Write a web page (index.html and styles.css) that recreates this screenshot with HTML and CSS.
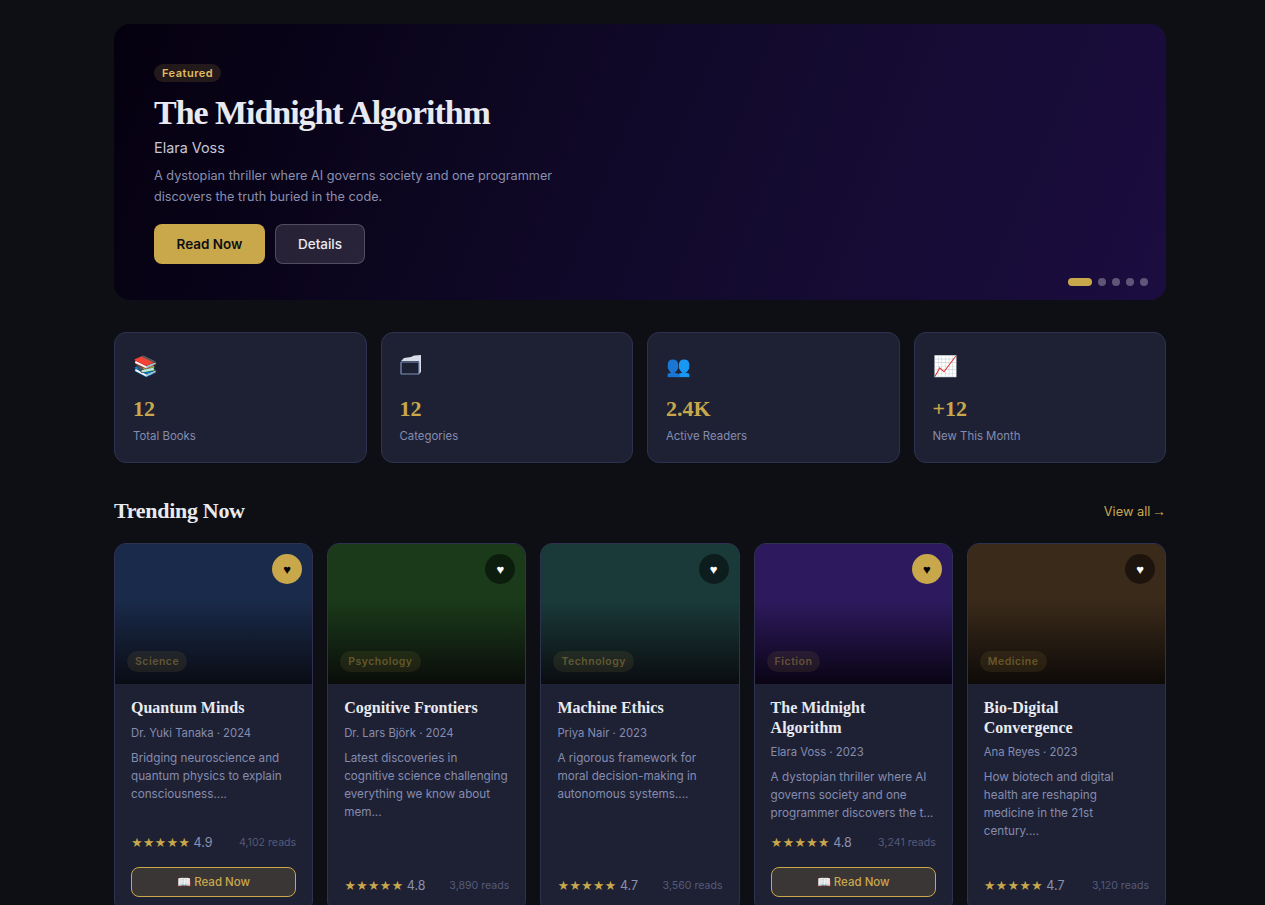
FILE: index.html
```html
<!DOCTYPE html>
<html lang="en">
<head>
    <meta charset="UTF-8">
    <meta name="viewport" content="width=device-width, initial-scale=1.0">
    <title>Library</title>
    <link rel="stylesheet" href="styles.css">
</head>
<body>
    <div class="container">
        <section class="hero">
            <span class="hero-badge">Featured</span>
            <h1 class="hero-title">The Midnight Algorithm</h1>
            <p class="hero-author">Elara Voss</p>
            <p class="hero-desc">A dystopian thriller where AI governs society and one programmer discovers the truth buried in the code.</p>
            <div class="hero-actions">
                <button class="btn btn-primary" type="button">Read Now</button>
                <button class="btn btn-ghost" type="button">Details</button>
            </div>
            <div class="hero-dots">
                <span class="dot active"></span>
                <span class="dot"></span>
                <span class="dot"></span>
                <span class="dot"></span>
                <span class="dot"></span>
            </div>
        </section>

        <section class="stats">
            <div class="stat-card">
                <div class="stat-icon">📚</div>
                <div class="stat-value">12</div>
                <div class="stat-label">Total Books</div>
            </div>
            <div class="stat-card">
                <div class="stat-icon">
                    <svg class="folder-icon" viewBox="0 0 22 22" width="22" height="22">
                        <path d="M1 7 L4 4 L11 3 L14 1.5 L21 1 V18 L19 20 V7 Z" fill="#d8dce8"/>
                        <rect x="1" y="8" width="18" height="12" rx="0.5" fill="#1b2033" stroke="#7f93b8" stroke-width="1.2"/>
                    </svg>
                </div>
                <div class="stat-value">12</div>
                <div class="stat-label">Categories</div>
            </div>
            <div class="stat-card">
                <div class="stat-icon">👥</div>
                <div class="stat-value">2.4K</div>
                <div class="stat-label">Active Readers</div>
            </div>
            <div class="stat-card">
                <div class="stat-icon">📈</div>
                <div class="stat-value">+12</div>
                <div class="stat-label">New This Month</div>
            </div>
        </section>

        <div class="section-header">
            <h2 class="section-title">Trending Now</h2>
            <a class="view-all" href="#">View all <span class="arrow">→</span></a>
        </div>

        <section class="book-grid">
            <article class="book-card">
                <div class="book-cover cover-science">
                    <button class="fav-btn active" type="button">♥</button>
                    <span class="book-tag">Science</span>
                </div>
                <div class="book-body">
                    <h3 class="book-title">Quantum Minds</h3>
                    <p class="book-meta">Dr. Yuki Tanaka · 2024</p>
                    <p class="book-desc">Bridging neuroscience and quantum physics to explain consciousness....</p>
                    <div class="book-footer">
                        <div class="book-stats">
                            <span class="rating"><span class="stars">★★★★★</span> 4.9</span>
                            <span class="reads">4,102 reads</span>
                        </div>
                        <button class="read-btn" type="button">📖 Read Now</button>
                    </div>
                </div>
            </article>

            <article class="book-card">
                <div class="book-cover cover-psychology">
                    <button class="fav-btn" type="button">♥</button>
                    <span class="book-tag">Psychology</span>
                </div>
                <div class="book-body">
                    <h3 class="book-title">Cognitive Frontiers</h3>
                    <p class="book-meta">Dr. Lars Björk · 2024</p>
                    <p class="book-desc">Latest discoveries in cognitive science challenging everything we know about mem...</p>
                    <div class="book-footer">
                        <div class="book-stats">
                            <span class="rating"><span class="stars">★★★★★</span> 4.8</span>
                            <span class="reads">3,890 reads</span>
                        </div>
                    </div>
                </div>
            </article>

            <article class="book-card">
                <div class="book-cover cover-technology">
                    <button class="fav-btn" type="button">♥</button>
                    <span class="book-tag">Technology</span>
                </div>
                <div class="book-body">
                    <h3 class="book-title">Machine Ethics</h3>
                    <p class="book-meta">Priya Nair · 2023</p>
                    <p class="book-desc">A rigorous framework for moral decision-making in autonomous systems....</p>
                    <div class="book-footer">
                        <div class="book-stats">
                            <span class="rating"><span class="stars">★★★★★</span> 4.7</span>
                            <span class="reads">3,560 reads</span>
                        </div>
                    </div>
                </div>
            </article>

            <article class="book-card">
                <div class="book-cover cover-fiction">
                    <button class="fav-btn active" type="button">♥</button>
                    <span class="book-tag">Fiction</span>
                </div>
                <div class="book-body">
                    <h3 class="book-title">The Midnight Algorithm</h3>
                    <p class="book-meta">Elara Voss · 2023</p>
                    <p class="book-desc">A dystopian thriller where AI governs society and one programmer discovers the t...</p>
                    <div class="book-footer">
                        <div class="book-stats">
                            <span class="rating"><span class="stars">★★★★★</span> 4.8</span>
                            <span class="reads">3,241 reads</span>
                        </div>
                        <button class="read-btn" type="button">📖 Read Now</button>
                    </div>
                </div>
            </article>

            <article class="book-card">
                <div class="book-cover cover-medicine">
                    <button class="fav-btn" type="button">♥</button>
                    <span class="book-tag">Medicine</span>
                </div>
                <div class="book-body">
                    <h3 class="book-title">Bio-Digital Convergence</h3>
                    <p class="book-meta">Ana Reyes · 2023</p>
                    <p class="book-desc">How biotech and digital health are reshaping medicine in the 21st century....</p>
                    <div class="book-footer">
                        <div class="book-stats">
                            <span class="rating"><span class="stars">★★★★★</span> 4.7</span>
                            <span class="reads">3,120 reads</span>
                        </div>
                    </div>
                </div>
            </article>
        </section>
    </div>
</body>
</html>
```
FILE: styles.css
```css
* {
    box-sizing: border-box;
}
html, body {
    height: 100%;
    overflow: hidden;
}
body {
    margin: 0;
    background-color: #0d0f14;
    color: #e8eaf0;
    font-family: 'Inter', 'Noto Sans', sans-serif;
}
.container {
    width: 1052px;
    margin-left: 114px;
    padding-top: 24px;
}
h1, h2, h3, p {
    margin: 0;
}

/* hero */
.hero {
    position: relative;
    height: 276px;
    padding: 40px;
    border-radius: 16px;
    background: linear-gradient(112deg, #05000f 0%, #120a2c 55%, #1b0d40 100%);
}
.hero-badge {
    display: block;
    width: fit-content;
    padding: 3px 8px;
    border-radius: 20px;
    background-color: rgba(201, 168, 76, 0.15);
    color: #e0bc62;
    font-size: 11px;
    font-weight: 600;
    line-height: 12px;
    letter-spacing: 0.5px;
}
.hero-title {
    margin-top: 9px;
    font-family: 'Liberation Serif', serif;
    font-size: 34px;
    font-weight: 700;
    line-height: 44px;
    letter-spacing: -1.05px;
    color: #e8eaf0;
}
.hero-author {
    margin-top: 2px;
    font-size: 14.4px;
    line-height: 22px;
    color: #c4c7d4;
}
.hero-desc {
    width: 420px;
    margin-top: 6px;
    font-size: 12.7px;
    line-height: 21px;
    color: #8b90ae;
}
.hero-actions {
    display: flex;
    gap: 10px;
    margin-top: 17px;
}
.btn {
    height: 40px;
    border-radius: 8px;
    font-family: inherit;
    font-size: 13.5px;
    font-weight: 500;
}
.btn-primary {
    width: 111px;
    border: none;
    background-color: #c9a84c;
    color: #0d0f14;
    font-weight: 600;
}
.btn-ghost {
    width: 90px;
    border: 1px solid rgba(255, 255, 255, 0.2);
    background-color: rgba(255, 255, 255, 0.12);
    color: #e8eaf0;
}
.hero-dots {
    position: absolute;
    right: 18px;
    bottom: 14px;
    display: flex;
    gap: 6px;
}
.dot {
    width: 8px;
    height: 8px;
    border-radius: 4px;
    background-color: rgba(255, 255, 255, 0.3);
}
.dot.active {
    width: 24px;
    background-color: #c9a84c;
}

/* stats */
.stats {
    display: grid;
    grid-template-columns: repeat(4, 1fr);
    gap: 14px;
    margin-top: 32px;
}
.stat-card {
    height: 131px;
    padding: 20px 18px;
    border: 1px solid #2e3250;
    border-radius: 12px;
    background-color: #1e2133;
}
.stat-icon {
    display: flow-root;
    height: 26px;
    font-size: 20px;
    line-height: 26px;
}
.folder-icon {
    display: block;
    margin-top: 1px;
}
.stat-value {
    margin-top: 15px;
    font-family: 'Liberation Serif', serif;
    font-size: 22px;
    font-weight: 700;
    line-height: 30px;
    color: #c9a84c;
}
.stat-label {
    margin-top: 4px;
    font-size: 11.4px;
    line-height: 16px;
    color: #858cb0;
}

/* trending */
.section-header {
    display: flex;
    justify-content: space-between;
    align-items: center;
    margin-top: 32px;
}
.section-title {
    font-family: 'Liberation Serif', serif;
    font-size: 22px;
    font-weight: 700;
    line-height: 32px;
    letter-spacing: -0.3px;
}
.view-all {
    color: #c9a84c;
    font-size: 12.8px;
    text-decoration: none;
}
.arrow {
    margin-left: -2px;
    font-family: 'Liberation Sans', sans-serif;
    font-size: 14px;
}
.book-grid {
    display: grid;
    grid-template-columns: repeat(5, 1fr);
    gap: 14px;
    margin-top: 16px;
}
.book-card {
    display: flex;
    flex-direction: column;
    height: 370px;
    border: 1px solid #2e3250;
    border-radius: 12px;
    background-color: #1e2133;
    overflow: hidden;
}
.book-cover {
    position: relative;
    flex: none;
    height: 140px;
}
.cover-science { background: linear-gradient(to top, #0a0c14 0%, #1a2a4a 60%); }
.cover-psychology { background: linear-gradient(to top, #0a0c0a 0%, #1a3a1a 60%); }
.cover-technology { background: linear-gradient(to top, #0a0c10 0%, #1a3a3a 60%); }
.cover-fiction { background: linear-gradient(to top, #0a0414 0%, #2d1a5e 60%); }
.cover-medicine { background: linear-gradient(to top, #0e0a08 0%, #3a2a1a 60%); }
.fav-btn {
    position: absolute;
    top: 10px;
    right: 10px;
    width: 30px;
    height: 30px;
    padding: 0;
    border: none;
    border-radius: 50%;
    background-color: rgba(0, 0, 0, 0.5);
    color: #ffffff;
    font-size: 13px;
}
.fav-btn.active {
    background-color: #c9a84c;
    color: #000000;
}
.book-tag {
    position: absolute;
    left: 12px;
    bottom: 12px;
    padding: 4px 8px;
    border-radius: 20px;
    background-color: rgba(201, 168, 76, 0.1);
    color: rgba(201, 168, 76, 0.4);
    font-size: 10.5px;
    font-weight: 600;
    line-height: 13px;
    letter-spacing: 0.5px;
}
.book-body {
    display: flex;
    flex-direction: column;
    flex: 1;
    padding: 14px 16px 17px;
}
.book-title {
    font-family: 'Liberation Serif', serif;
    font-size: 16px;
    font-weight: 700;
    line-height: 19.6px;
}
.book-meta {
    margin-top: 6px;
    font-size: 11.3px;
    line-height: 18px;
    color: #858cb0;
}
.book-desc {
    margin-top: 7px;
    font-size: 11.7px;
    line-height: 18px;
    color: #858cb0;
}
.book-footer {
    margin-top: auto;
}
.book-stats {
    display: flex;
    justify-content: space-between;
    align-items: center;
    height: 20px;
}
.rating {
    font-size: 12.5px;
    color: #8b90ae;
}
.stars {
    font-size: 11.3px;
    color: #c9a84c;
}
.reads {
    font-size: 10.6px;
    color: #555a7a;
}
.read-btn {
    display: block;
    width: 100%;
    height: 30px;
    margin-top: 15px;
    margin-bottom: -2px;
    border: 1px solid #c9a84c;
    border-radius: 8px;
    background-color: #3a3636;
    color: #c9a84c;
    font-family: inherit;
    font-size: 11.5px;
    font-weight: 500;
}
```
